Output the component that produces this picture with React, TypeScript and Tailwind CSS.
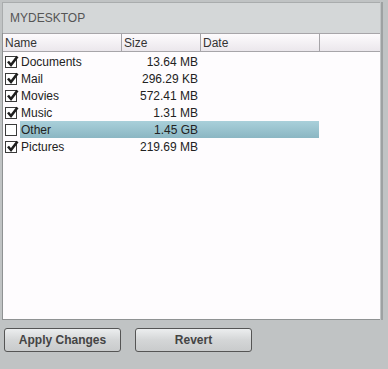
import React from "react";

const rows = [
  { name: "Documents", size: "13.64 MB", checked: true },
  { name: "Mail", size: "296.29 KB", checked: true },
  { name: "Movies", size: "572.41 MB", checked: true },
  { name: "Music", size: "1.31 MB", checked: true },
  { name: "Other", size: "1.45 GB", checked: false, selected: true },
  { name: "Pictures", size: "219.69 MB", checked: true },
];

function Check({ checked }: { checked: boolean }) {
  return (
    <div className="relative w-[12px] h-[12px] border border-[#3a3a3a] bg-white shrink-0">
      {checked && (
        <svg className="absolute left-[0px] top-[-2px]" width="13" height="13" viewBox="0 0 13 13">
          <path d="M2 6.5 L5 10 L11.5 1.5" fill="none" stroke="#1e1e1e" strokeWidth="2.6" />
        </svg>
      )}
    </div>
  );
}

export default function App() {
  return (
    <div
      className="w-[388px] h-[369px] bg-[#c0c3c4] overflow-hidden pt-[2px] pl-[2px]"
      style={{ fontFamily: '"Liberation Sans", Arial, sans-serif' }}
    >
      <div className="w-[381px] border-r-2 border-[#9ea1a2] pr-[1px]">
        <div className="border-t border-l border-[#a9acad] h-[31px] bg-[#d4d7d8] flex items-center pl-[7px] text-[12px] text-[#555]">
          MYDESKTOP
        </div>
        <div className="h-[287px] bg-[#fefcfe] border-l border-b border-[#8f9293] flex flex-col">
          <div className="h-[19px] flex text-[12px] text-[#333] border-t border-b border-[#a7a5a9] bg-gradient-to-b from-[#fdfbfd] to-[#ebe7ec]">
            <div className="w-[119px] border-r border-[#a6a4a8] pl-[2px] leading-[18px]">Name</div>
            <div className="w-[79px] border-r border-[#a6a4a8] pl-[2px] leading-[18px]">Size</div>
            <div className="w-[119px] border-r border-[#a6a4a8] pl-[2px] leading-[18px]">Date</div>
            <div className="flex-1" />
          </div>
          <div className="flex flex-col pt-[1px]">
            {rows.map((r) => (
              <div key={r.name} className="h-[17px] flex items-center text-[12px] text-[#222]">
                <div className="w-[17px] pl-[2px] flex items-center">
                  <Check checked={r.checked} />
                </div>
                <div
                  className={
                    "flex items-center h-[17px] w-[299px] " +
                    (r.selected ? "bg-gradient-to-b from-[#a9d0da] to-[#8bb6c3]" : "")
                  }
                >
                  <div className="w-[101px] pl-[1px]">{r.name}</div>
                  <div className="w-[77px] text-right">{r.size}</div>
                </div>
              </div>
            ))}
          </div>
        </div>
      </div>
      <div className="flex gap-[14px] pt-[8px] pl-[2px]">
        <button className="w-[117px] h-[24px] rounded-[3px] border border-[#555] bg-gradient-to-b from-[#eceeef] via-[#d4d6d7] to-[#c9cbcc] text-[12px] font-bold text-[#444]">
          Apply Changes
        </button>
        <button className="w-[117px] h-[24px] rounded-[3px] border border-[#555] bg-gradient-to-b from-[#eceeef] via-[#d4d6d7] to-[#c9cbcc] text-[12px] font-bold text-[#444]">
          Revert
        </button>
      </div>
    </div>
  );
}
